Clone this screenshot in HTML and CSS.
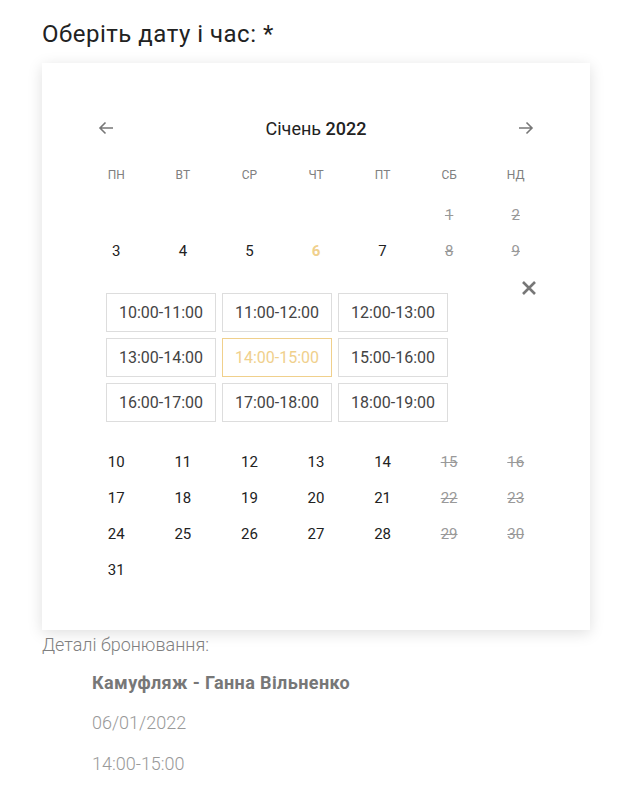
FILE: index.html
```html
<!DOCTYPE html>
<html lang="uk">
<head>
<meta charset="utf-8">
<title>Оберіть дату і час</title>
<link rel="stylesheet" href="styles.css">
</head>
<body>
<div class="page">
  <h2 class="title">Оберіть дату і час: *</h2>
  <div class="card">
    <div class="cal-header">
      <button class="nav" aria-label="prev">
        <svg width="16" height="14" viewBox="0 0 16 14"><path d="M15 7H2M7.5 1.5L2 7l5.5 5.5" fill="none" stroke="#777" stroke-width="1.6"/></svg>
      </button>
      <div class="month">Січень <b>2022</b></div>
      <button class="nav" aria-label="next">
        <svg width="16" height="14" viewBox="0 0 16 14"><path d="M1 7h13M8.5 1.5L14 7l-5.5 5.5" fill="none" stroke="#777" stroke-width="1.6"/></svg>
      </button>
    </div>
    <div class="weekdays">
      <span>пн</span><span>вт</span><span>ср</span><span>чт</span><span>пт</span><span>сб</span><span>нд</span>
    </div>
    <div class="days">
      <span></span><span></span><span></span><span></span><span></span>
      <span class="off">1</span><span class="off">2</span>
      <span>3</span><span>4</span><span>5</span><span class="sel">6</span><span>7</span>
      <span class="off">8</span><span class="off">9</span>
    </div>
    <div class="slots">
      <button class="close" aria-label="close">
        <svg width="16" height="16" viewBox="0 0 16 16"><path d="M2 2l12 12M14 2L2 14" stroke="#777" stroke-width="2.6"/></svg>
      </button>
      <div class="slot-grid">
        <div class="slot">10:00-11:00</div>
        <div class="slot">11:00-12:00</div>
        <div class="slot">12:00-13:00</div>
        <div class="slot">13:00-14:00</div>
        <div class="slot active">14:00-15:00</div>
        <div class="slot">15:00-16:00</div>
        <div class="slot">16:00-17:00</div>
        <div class="slot">17:00-18:00</div>
        <div class="slot">18:00-19:00</div>
      </div>
    </div>
    <div class="days">
      <span>10</span><span>11</span><span>12</span><span>13</span><span>14</span><span class="off">15</span><span class="off">16</span>
      <span>17</span><span>18</span><span>19</span><span>20</span><span>21</span><span class="off">22</span><span class="off">23</span>
      <span>24</span><span>25</span><span>26</span><span>27</span><span>28</span><span class="off">29</span><span class="off">30</span>
      <span>31</span>
    </div>
  </div>
  <div class="details">
    <div class="details-label">Деталі бронювання:</div>
    <div class="details-list">
      <div class="d-name">Камуфляж - Ганна Вільненко</div>
      <div class="d-line">06/01/2022</div>
      <div class="d-line">14:00-15:00</div>
    </div>
  </div>
</div>
</body>
</html>
```

FILE: styles.css
```css
* { box-sizing: border-box; }
html, body {
  margin: 0;
  padding: 0;
  background: #fff;
  font-family: Roboto, "Noto Sans", Arial, sans-serif;
  color: #222;
}
.page {
  padding: 19px 38px 0 42px;
}
.title {
  margin: 0 0 13px;
  font-size: 24px;
  letter-spacing: 0.5px;
  line-height: 31px;
  font-weight: 400;
  color: #222;
}
.card {
  width: 548px;
  background: #fff;
  box-shadow: 0 3px 14px rgba(0, 0, 0, 0.13);
  padding: 43px 41px 42px;
}
.cal-header {
  height: 44px;
  display: flex;
  align-items: center;
  justify-content: space-between;
  padding: 0 15px 0 15px;
}
.nav, .close {
  border: 0;
  background: none;
  padding: 0;
  margin: 0;
  display: flex;
  cursor: pointer;
}
.month {
  font-size: 18px;
  color: #222;
}
.month b { font-weight: 500; }
.weekdays {
  margin-top: 5px;
  height: 40px;
  display: grid;
  grid-template-columns: repeat(7, 1fr);
  align-items: center;
  text-align: center;
  font-size: 12px;
  text-transform: uppercase;
  color: #808080;
}
.days {
  display: grid;
  grid-template-columns: repeat(7, 1fr);
  grid-auto-rows: 36px;
  align-items: center;
  text-align: center;
  font-size: 15px;
  color: #222;
}
.weekdays + .days { margin-top: 2px; }
.days .off {
  color: #999;
  text-decoration: line-through;
}
.days .sel {
  color: #f0d08c;
  font-weight: 700;
}
.slots {
  position: relative;
  padding: 24px 0 22px 23px;
}
.close {
  position: absolute;
  top: 11px;
  right: 12px;
}
.slot-grid {
  display: grid;
  grid-template-columns: repeat(3, 110px);
  grid-auto-rows: 39px;
  gap: 6px;
}
.slot {
  border: 1px solid #ddd;
  display: flex;
  align-items: center;
  justify-content: center;
  font-size: 16px;
  color: #444;
}
.slot.active {
  border-color: #f0d08c;
  color: #f0d08c;
}
.details {
  color: #777;
}
.details-label {
  padding-top: 2px;
  font-size: 18px;
  line-height: 26px;
  font-weight: 300;
  color: #808080;
}
.details-list {
  padding-left: 50px;
  padding-top: 5px;
}
.d-name, .d-line {
  font-size: 18px;
  line-height: 40px;
}
.d-name {
  font-weight: 700;
  letter-spacing: 0.4px;
  color: #777;
}
.d-line {
  font-weight: 300;
  line-height: 40.5px;
  color: #999;
}
```
